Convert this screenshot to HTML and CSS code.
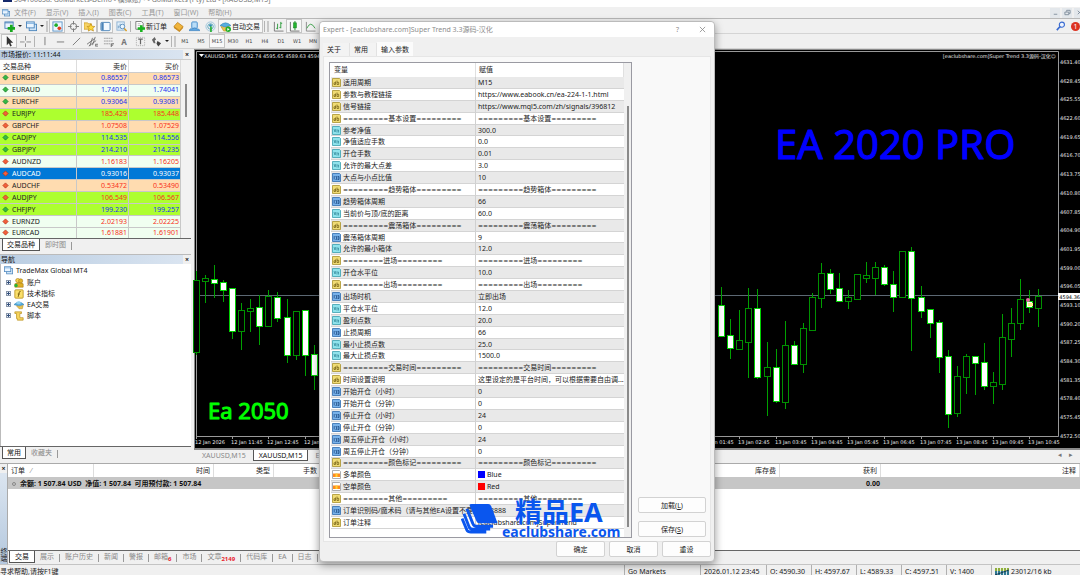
FILE: index.html
```html
<!DOCTYPE html>
<html lang="zh-CN">
<head>
<meta charset="utf-8">
<title>MetaTrader 4 - XAUUSD,M15</title>
<link rel="stylesheet" href="styles.css">
</head>
<body>
<svg class="sprite" aria-hidden="true">
  <symbol id="i-newchart" viewBox="0 0 12 12"><rect x="1" y="1" width="9" height="7" fill="#e8f3ff" stroke="#4b83b8"/><path d="M1 2h9" stroke="#4b83b8"/><path d="M8 4v8M4 8h8" stroke="#17a81d" stroke-width="3"/></symbol>
  <symbol id="i-profiles" viewBox="0 0 12 12"><rect x="3.500" y="3.500" width="8" height="7" fill="#cfe4f7" stroke="#4d86bd"/><rect x=".5" y="1" width="8.500" height="6.500" fill="#eaf5ff" stroke="#4d86bd"/><path d="M1 2.500h8" stroke="#6fa8dc"/></symbol>
  <symbol id="i-market" viewBox="0 0 12 12"><rect x="1" y="1" width="10" height="10" fill="#eef7ff" stroke="#5b93c7"/><circle cx="4.500" cy="4.500" r="2" fill="#1fae2b"/><circle cx="8" cy="8" r="2" fill="#e3401f"/></symbol>
  <symbol id="i-target" viewBox="0 0 12 12"><circle cx="6" cy="6" r="3.500" fill="none" stroke="#777"/><path d="M6 0v4M6 8v4M0 6h4M8 6h4" stroke="#777"/></symbol>
  <symbol id="i-star" viewBox="0 0 12 12"><path d="M0 2h4l1 1h3v6H0z" fill="#f6d366" stroke="#c99417" stroke-width=".7"/><path d="M7.500 3l1.300 2.700 3 .3-2.200 2 .7 3-2.800-1.500L4.700 11l.7-3-2-2 2.800-.3z" fill="#ffd93b" stroke="#b98312" stroke-width=".7"/></symbol>
  <symbol id="i-terminal" viewBox="0 0 12 12"><rect x="1" y="1.500" width="10" height="9" rx="1" fill="#f3f9ff" stroke="#4b83b8"/><rect x="1.500" y="2" width="2.500" height="8" fill="#4b83b8"/></symbol>
  <symbol id="i-tester" viewBox="0 0 12 12"><rect x="1" y="1" width="8" height="9" fill="#e3f0fb" stroke="#8db1d1"/><path d="M2.500 8V5M4.500 8V3" stroke="#6c9ac2"/><circle cx="7" cy="6" r="2.500" fill="#eaf6ff" stroke="#5b8ebd"/><path d="M9 8l2.500 3" stroke="#d69b22" stroke-width="1.500"/></symbol>
  <symbol id="i-order" viewBox="0 0 12 12"><path d="M2 .5h6l2 2V9H2z" fill="#fff" stroke="#777"/><path d="M4 3h3M4 5h4" stroke="#999" stroke-width=".7"/><path d="M8 4.500v7.500M4 8.200h8" stroke="#17b31d" stroke-width="2.800"/></symbol>
  <symbol id="i-book" viewBox="0 0 12 12"><path d="M1 6l4-4.500L11 6 7 10.500z" fill="#f1b53c" stroke="#b87a10" stroke-width=".8"/><path d="M1 6v1.500L7 12l4-4.500V6L7 10.500z" fill="#c88718"/></symbol>
  <symbol id="i-user" viewBox="0 0 12 12"><rect x="3" y="1" width="6" height="7" rx="1" fill="#b9ddf8" stroke="#3f8acb"/><path d="M0 10.500q1-3 3.500-2 3-2 5 0 2.500-.5 3.500 2z" fill="#5fa8e3" stroke="#3678b5" stroke-width=".6"/></symbol>
  <symbol id="i-signal" viewBox="0 0 12 12"><circle cx="6" cy="6" r="5" fill="none" stroke="#9cc5dc"/><circle cx="6" cy="6" r="3" fill="none" stroke="#55a4bb"/><circle cx="6" cy="5" r="1.500" fill="#2d8ab2"/><path d="M6.500 6v6" stroke="#22b02c" stroke-width="1.800"/></symbol>
  <symbol id="i-auto" viewBox="0 0 12 12"><path d="M0 5q6-6 12 0-6 3-12 0z" fill="#57aee0" stroke="#2d7aad" stroke-width=".6"/><path d="M1 6q4 2.500 9 0l-2 5H4z" fill="#eac44f" stroke="#b38a1c" stroke-width=".6"/><circle cx="9" cy="9" r="3" fill="#1fae2b"/><path d="M8 7.500v3L10.500 9z" fill="#fff"/></symbol>
  <symbol id="i-hat" viewBox="0 0 12 12"><path d="M0 5.500q6-6 12 0-6 3-12 0z" fill="#57aee0" stroke="#2d7aad" stroke-width=".6"/><path d="M3 2.500q3-2 5 0v2q-2 1-5 0z" fill="#8fd0f2"/><path d="M3 7q3 1.500 8-.5l-1 4H6z" fill="#eac44f" stroke="#b38a1c" stroke-width=".6"/></symbol>
  <symbol id="i-bars" viewBox="0 0 12 12"><path d="M1.500 1v10h10" fill="none" stroke="#777"/><path d="M5 3v6M5 8H3.500M8.500 1v7M8.500 2.500H10M8.500 7H7" fill="none" stroke="#2b9a3b"/></symbol>
  <symbol id="i-candles" viewBox="0 0 12 12"><path d="M1.500 1v10h10" fill="none" stroke="#666"/><path d="M6.500 0v10" stroke="#1b8f25"/><rect x="5" y="2" width="3" height="5.500" fill="#23b52f" stroke="#13801c" stroke-width=".6"/></symbol>
  <symbol id="i-line" viewBox="0 0 12 12"><path d="M1.500 1v10h10" fill="none" stroke="#888"/><path d="M2 8q4-9 9 0" fill="none" stroke="#3aa147"/></symbol>
  <symbol id="i-cursor" viewBox="0 0 12 12"><path d="M3 0v10l2.300-2 1.500 3.500 1.700-.8L7 7.300h3z" fill="#333"/></symbol>
  <symbol id="i-cross" viewBox="0 0 12 12"><path d="M6 0v5M6 8v4M0 6.500h5M7 6.500h5" stroke="#888"/></symbol>
  <symbol id="i-v" viewBox="0 0 12 12"><path d="M6.500 1v9" stroke="#777"/></symbol>
  <symbol id="i-h" viewBox="0 0 12 12"><path d="M2 6.500h8" stroke="#777"/></symbol>
  <symbol id="i-d" viewBox="0 0 12 12"><path d="M2 10L10 2" stroke="#777"/></symbol>
  <symbol id="i-chan" viewBox="0 0 12 12"><path d="M0 9l8-6M2 11l8-6M3 11L6 2M6 10l3-9M9 9h3M9 11h3M9.500 9v2" stroke="#666" fill="none" stroke-width=".9"/></symbol>
  <symbol id="i-fibo" viewBox="0 0 12 12"><path d="M1 2.500h10M1 5.500h10M1 8.500h7" stroke="#999" stroke-dasharray="2 .5"/><path d="M9 12V8.500h3M9 10h2" stroke="#666" fill="none"/></symbol>
  <symbol id="i-box" viewBox="0 0 12 12"><rect x="1.500" y="1.500" width="9" height="9" fill="none" stroke="#aaa" stroke-dasharray="1 1"/><path d="M3.500 3.500h5M6 3.500V9" stroke="#666" stroke-width="1.300"/></symbol>
  <symbol id="i-arrows" viewBox="0 0 12 12"><path d="M1 4l3-3 1.500 3L4 5l1 3H3z" fill="#666"/><path d="M7 5.500l4 2.500-3 3.500-2-3z" fill="#444"/></symbol>
  <symbol id="i-search" viewBox="0 0 12 12"><circle cx="7.500" cy="4" r="2.800" fill="#eef4ff" stroke="#3a6bd0" stroke-width="1.200"/><path d="M5.500 6L2 10" stroke="#3a6bd0" stroke-width="1.800"/></symbol>
  <symbol id="i-up" viewBox="0 0 8 8"><path d="M4 1l3 3-3 3-3-3z" fill="#35b845" stroke="#187a28" stroke-width=".8"/></symbol>
  <symbol id="i-down" viewBox="0 0 8 8"><path d="M4 1l3 3-3 3-3-3z" fill="#f2603a" stroke="#b53016" stroke-width=".8"/></symbol>
  <symbol id="i-str" viewBox="0 0 9 9"><path d="M.5.500h7l1 1v7h-8z" fill="#f0dc74" stroke="#a8922c" stroke-width=".8"/><path d="M3.500 3.500v3h-1.500v-1.700h1.500M5 2.500v4h1.700V4.300H5" fill="none" stroke="#6d5a10" stroke-width=".7"/></symbol>
  <symbol id="i-dbl" viewBox="0 0 9 9"><path d="M.5.500h7l1 1v7h-8z" fill="#8fe3ec" stroke="#3a9fae" stroke-width=".8"/><path d="M2 3l1 3 .8-3M5 3.500v3M6.500 6.500V4H5.500" fill="none" stroke="#20768a" stroke-width=".6"/></symbol>
  <symbol id="i-int" viewBox="0 0 9 9"><path d="M.5.500h7l1 1v7h-8z" fill="#78b2ea" stroke="#2f6cae" stroke-width=".8"/><path d="M2.200 3v3.500M3.500 3.500h1v3h-1M5.500 3.500h1.500v3H5.500M5.500 5H7" fill="none" stroke="#123f78" stroke-width=".7"/></symbol>
  <symbol id="i-col" viewBox="0 0 9 9"><path d="M.5.500h7l1 1v7h-8z" fill="#fff" stroke="#999" stroke-width=".8"/><path d="M1 3.500h7v3.500H1z" fill="#ff8a1e"/><path d="M3.500 3.500h2v3.500h-2z" fill="#ffd02e"/></symbol>
  <symbol id="i-acct" viewBox="0 0 12 12"><circle cx="4.500" cy="3" r="2.500" fill="#f5cf4d" stroke="#a67b13" stroke-width=".7"/><circle cx="8" cy="3.500" r="2.500" fill="#e5b52d" stroke="#a67b13" stroke-width=".7"/><path d="M1 11V7q5-3 10 0v4z" fill="#e0ae26" stroke="#a67b13" stroke-width=".7"/><circle cx="2.500" cy="9" r="2" fill="#2bb434"/></symbol>
  <symbol id="i-ind" viewBox="0 0 12 12"><rect x="1" y="1" width="10" height="10" rx="1" fill="#fadf6b" stroke="#b9921f"/><path d="M8 3q-2-.5-2 2L5 9.500M4.500 6H7" fill="none" stroke="#6d5206"/></symbol>
  <symbol id="i-script" viewBox="0 0 12 12"><path d="M1 1h8v2H7v5h4v3H4V9H3V3H1z" fill="#f6d45c" stroke="#b58c1c" stroke-width=".8"/></symbol>
</svg>

<header class="chrome">
  <div class="titlebar"><span class="app-mark"></span><span>504100658: GoMarkets-Demo - 模拟账户 - GoMarkets (Pty) Ltd - [XAUUSD,M15]</span></div>
  <nav class="menubar" aria-label="菜单">
    <svg class="icon"><use href="#i-profiles"/></svg>
    <button>文件(F)</button><button>显示(V)</button><button>插入(I)</button><button>图表(C)</button><button>工具(T)</button><button>窗口(W)</button><button>帮助(H)</button>
    <span class="spacer"></span>
    <button class="mdi" aria-label="最小化"><svg viewBox="0 0 8 8"><path d="M2 6h4" stroke="#7c8a99"/></svg></button>
    <button class="mdi" aria-label="还原"><svg viewBox="0 0 8 8"><path d="M3 3V1.500h4V5H5.500M1 3.500h4.500v3H1z" fill="none" stroke="#7c8a99"/></svg></button>
    <button class="mdi mdi-last" aria-label="关闭"><svg viewBox="0 0 8 8"><path d="M2 2l4 4M6 2L2 6" stroke="#7c8a99"/></svg></button>
  </nav>
  <div class="toolbar">
    <button class="tool" aria-label="新图表"><svg class="icon"><use href="#i-newchart"/></svg></button><span class="caret"></span>
    <button class="tool" aria-label="配置文件"><svg class="icon"><use href="#i-profiles"/></svg></button><span class="caret"></span>
    <span class="grip"></span>
    <button class="tool on" aria-label="市场报价"><svg class="icon"><use href="#i-market"/></svg></button>
    <button class="tool" aria-label="数据窗口"><svg class="icon"><use href="#i-target"/></svg></button>
    <button class="tool on" aria-label="导航"><svg class="icon"><use href="#i-star"/></svg></button>
    <button class="tool on" aria-label="终端"><svg class="icon"><use href="#i-terminal"/></svg></button>
    <button class="tool" aria-label="策略测试"><svg class="icon"><use href="#i-tester"/></svg></button>
    <span class="sep"></span>
    <button class="tool wide"><svg class="icon"><use href="#i-order"/></svg>新订单</button>
    <button class="tool" aria-label="编辑器"><svg class="icon"><use href="#i-book"/></svg></button>
    <button class="tool" aria-label="社区"><svg class="icon"><use href="#i-user"/></svg></button>
    <button class="tool" aria-label="信号"><svg class="icon"><use href="#i-signal"/></svg></button>
    <button class="tool wide on"><svg class="icon"><use href="#i-auto"/></svg>自动交易</button>
    <span class="sep"></span><span class="grip"></span>
    <button class="tool" aria-label="柱状图"><svg class="icon"><use href="#i-bars"/></svg></button>
    <button class="tool on" aria-label="蜡烛图"><svg class="icon"><use href="#i-candles"/></svg></button>
    <button class="tool" aria-label="折线图"><svg class="icon"><use href="#i-line"/></svg></button>
    <span class="spacer"></span>
    <button class="tool" aria-label="搜索"><svg class="icon"><use href="#i-search"/></svg></button>
    <button class="tool alert" aria-label="通知"><span class="bubble">1</span></button>
  </div>
  <div class="toolbar">
    <button class="tool on" aria-label="光标"><svg class="icon"><use href="#i-cursor"/></svg></button>
    <button class="tool" aria-label="十字线"><svg class="icon"><use href="#i-cross"/></svg></button>
    <span class="sep"></span>
    <button class="tool" aria-label="垂直线"><svg class="icon"><use href="#i-v"/></svg></button>
    <button class="tool" aria-label="水平线"><svg class="icon"><use href="#i-h"/></svg></button>
    <button class="tool" aria-label="趋势线"><svg class="icon"><use href="#i-d"/></svg></button>
    <button class="tool" aria-label="通道"><svg class="icon"><use href="#i-chan"/></svg></button>
    <button class="tool" aria-label="斐波那契"><svg class="icon"><use href="#i-fibo"/></svg></button>
    <button class="tool letter">A</button>
    <button class="tool" aria-label="标签"><svg class="icon"><use href="#i-box"/></svg></button>
    <button class="tool" aria-label="箭头"><svg class="icon"><use href="#i-arrows"/></svg></button><span class="caret"></span>
    <span class="sep"></span><span class="grip"></span>
    <button class="tool tf">M1</button><button class="tool tf">M5</button><button class="tool tf on">M15</button><button class="tool tf">M30</button><button class="tool tf">H1</button><button class="tool tf">H4</button><button class="tool tf">D1</button><button class="tool tf">W1</button><button class="tool tf">MN</button>
  </div>
</header>

<main class="main">
  <aside class="side">
    <section class="market">
      <h2 class="pane-title">市场报价: 11:11:44<button class="close" aria-label="关闭">×</button></h2>
      <div class="quotes">
        <table>
          <colgroup><col class="c-sym"><col class="c-bid"><col></colgroup>
          <thead><tr><th>交易品种</th><th>卖价</th><th>买价</th></tr></thead>
          <tbody id="quotes"></tbody>
        </table>
        <div class="scroll"><span class="thumb"></span></div>
      </div>
      <div class="tabs"><button class="tab active">交易品种</button><button class="tab">即时图</button></div>
    </section>
    <section class="navigator">
      <h2 class="pane-title">导航<button class="close" aria-label="关闭">×</button></h2>
      <ul class="tree">
        <li class="root"><svg class="icon"><use href="#i-profiles"/></svg>TradeMax Global MT4</li>
        <li><span class="plus"></span><svg class="icon"><use href="#i-acct"/></svg>账户</li>
        <li><span class="plus"></span><svg class="icon"><use href="#i-ind"/></svg>技术指标</li>
        <li><span class="plus"></span><svg class="icon"><use href="#i-hat"/></svg>EA交易</li>
        <li><span class="plus"></span><svg class="icon"><use href="#i-script"/></svg>脚本</li>
      </ul>
      <div class="tabs"><button class="tab active">常用</button><button class="tab">收藏夹</button></div>
    </section>
  </aside>
  <section class="workspace">
    <div class="chart">
      <svg class="plot" id="plot" role="img" aria-label="XAUUSD M15"></svg>
      <ol class="prices" id="prices"></ol>
    </div>
    <div class="chart-tabs">
      <button class="ctab">XAUUSD,M15</button><button class="ctab active">XAUUSD,M15</button><button class="ctab">EURUSD,H1</button>
      <span class="spacer"></span><span class="nudge">◂</span><span class="nudge">▸</span>
    </div>
  </section>
</main>

<section class="terminal">
  <div class="rail"><button class="close" aria-label="关闭">×</button><span class="rail-name">终端</span></div>
  <div class="term-body">
    <table class="orders">
      <colgroup><col class="o1"><col class="o2"><col class="o3"><col class="o4"><col class="o5"><col class="o6"><col></colgroup>
      <thead><tr><th>订单 <span class="slash">⁄</span></th><th>时间</th><th>类型</th><th>手数</th><th>库存费</th><th>获利</th><th>注释</th></tr></thead>
      <tbody><tr><td colspan="5"><span class="ring"></span>余额: 1 507.84 USD&nbsp; 净值: 1 507.84&nbsp; 可用预付款: 1 507.84</td><td>0.00</td><td></td></tr></tbody>
    </table>
    <div class="term-space"></div>
    <div class="tabs">
      <button class="tab active">交易</button><button class="tab">展示</button><button class="tab">账户历史</button><button class="tab">新闻</button><button class="tab">警报</button><button class="tab">邮箱<sub>6</sub></button><button class="tab">市场</button><button class="tab">文章<sub>2149</sub></button><button class="tab">代码库</button><button class="tab">EA</button><button class="tab">日志</button>
    </div>
  </div>
</section>

<footer class="status">
  <span class="s-help">寻求帮助,请按F1键</span>
  <span class="s-name">Go Markets</span><span class="s-time">2026.01.12 23:45</span><span class="s-val">O: 4590.30</span><span class="s-val">H: 4597.67</span><span class="s-val">L: 4589.33</span><span class="s-val">C: 4597.51</span><span class="s-val">V: 1400</span>
  <span class="s-net"><svg viewBox="0 0 14 9"><path d="M0 0h14v3H0z" fill="#8fae3c"/><path d="M0 3h14v6H0z" fill="#2f7892"/><path d="M2.500 0v9M5.500 0v9M8.500 0v9M11.500 0v9" stroke="#fff" stroke-width=".8"/><path d="M0 7L14 2" stroke="#123c55"/></svg>23012/16 kb</span>
</footer>

<div class="dialog" role="dialog" aria-labelledby="dlg-title">
  <div class="dlg-head"><span id="dlg-title">Expert - [eaclubshare.com]Super Trend 3.3源码-汉化</span><span class="spacer"></span><button aria-label="帮助">?</button><button aria-label="关闭"><svg viewBox="0 0 8 8"><path d="M1 1l6 6M7 1L1 7" stroke="#888" stroke-width=".9"/></svg></button></div>
  <div class="dlg-tabs"><button>关于</button><button>常用</button><button class="active">输入参数</button></div>
  <div class="dlg-page">
    <div class="listbox">
      <table class="params">
        <colgroup><col class="p-name"><col></colgroup>
        <thead><tr><th>变量</th><th>赋值</th></tr></thead>
        <tbody id="params"></tbody>
      </table>
      <div class="scroll"><span class="thumb"></span></div>
    </div>
    <div class="dlg-side"><button class="btn">加载(<u>L</u>)</button><button class="btn">保存(<u>S</u>)</button></div>
  </div>
  <div class="dlg-foot"><button class="btn">确定</button><button class="btn">取消</button><button class="btn">重设</button></div>
  <div class="brand">
    <svg viewBox="0 0 38 32"><path fill="#0a56ee" d="M11 1h17q2 0 3 2l6 16q1 2-1 2H19q-2 0-3-2L9 3q-1-2 2-2z"/><path d="M6 6l6 15q1 3 4 3h17M3 11l5 13q1 3 4 3h18M1 16l5 12q1 2 4 2h16" fill="none" stroke="#0a56ee" stroke-width="3"/></svg>
    <div class="brand-name">精品EA</div>
    <div class="brand-url">eaclubshare.com</div>
  </div>
</div>
<script src="app.js"></script>
</body>
</html>
```
FILE: styles.css
```css
* { box-sizing: border-box; }
body {
  margin: 0;
  height: 100vh;
  display: flex;
  flex-direction: column;
  overflow: hidden;
  background: #f0f0f0;
  color: #222;
  font: 7px/11px "Noto Sans", "Noto Sans CJK SC", sans-serif;
}
button { font: inherit; color: inherit; border: 0; background: none; padding: 0; margin: 0; white-space: nowrap; }
table { border-collapse: separate; border-spacing: 0; table-layout: fixed; width: 100%; }
th { font-weight: 400; text-align: left; }
th, td { padding: 0; white-space: nowrap; overflow: hidden; }
h2, ul, ol { margin: 0; padding: 0; list-style: none; font-size: inherit; font-weight: 400; }
.sprite { display: none; }
.icon { width: 11px; height: 11px; flex: none; }
.spacer { flex: 1; }

/* window chrome */
.chrome { flex: none; }
.titlebar { height: 7px; background: #fff; color: #777; display: flex; align-items: flex-end; gap: 2px; padding-left: 3px; overflow: hidden; line-height: 12px; }
.titlebar span:last-child { margin-bottom: 1px; }
.app-mark { width: 9px; height: 2px; background: #14286b; margin-bottom: 5px; }
.menubar { height: 12px; display: flex; align-items: center; gap: 10px; padding-left: 2px; border-bottom: 1px solid #b8b8b8; color: #999; }
.menubar .icon { width: 8px; height: 8px; margin-right: -6px; }
.mdi { width: 10px; height: 10px; background: #e3e7eb; display: grid; place-items: center; margin-left: -8px; }
.mdi svg { width: 7px; height: 7px; }
.mdi-last { margin-right: -4px; }
.toolbar { height: 15px; display: flex; align-items: center; padding-left: 1px; border-bottom: 1px solid #d4d4d4; }
.tool { width: 16px; height: 14px; flex: none; display: flex; align-items: center; justify-content: center; border: 1px solid transparent; }
.tool.on { background: #f8f8f8; border-color: #c4c4c4; }
.tool.wide { width: auto; padding: 0 2px 0 1px; gap: 1px; }
.tool.letter { font-weight: 700; color: #777; font-size: 8px; }
.tool.tf { font: 5px/10px "DejaVu Sans", sans-serif; color: #444; }
.caret { border: 2px solid transparent; border-top-color: #222; margin: 2px 1px 0 1px; height: 0; }
.sep { width: 1px; height: 11px; background: #b4b4b4; margin: 0 1px; flex: none; }
.grip { width: 2px; height: 11px; background: #c8c8c8; margin: 0 1px; flex: none; }
.alert { justify-content: flex-end; width: 12px; }
.bubble { width: 9px; height: 9px; border-radius: 5px; background: #dc3322; color: #fff; line-height: 9px; text-align: center; flex: none; margin-right: -1px; }

/* side panes */
.main { flex: 1; min-height: 0; display: flex; }
.side { width: 194px; flex: none; display: flex; flex-direction: column; padding: 1px 3px 3px 0; }
.pane-title { height: 9px; line-height: 9px; display: flex; justify-content: space-between; background: linear-gradient(90deg, #b9cde2, #dbe5f1); padding: 0 0 0 1px; color: #111; }
.close { width: 8px; height: 9px; line-height: 8px; font-weight: 700; background: #f0f0f0; color: #222; }
.quotes { display: flex; height: 179px; overflow: hidden; background: #fff; border-top: 1px solid #ccc; }
.quotes table { flex: 1; width: 0; height: 180px; }
.c-sym { width: 77px; }
.c-bid { width: 52px; }
.quotes thead th { height: 13px; border-right: 1px solid #ddd; border-bottom: 1px solid #ccc; padding: 0 3px; }
.quotes th:nth-child(n+2), .quotes td:nth-child(n+2) { text-align: right; padding-right: 1px; }
.quotes td { line-height: 10px; border-right: 1px solid #c8c8c8; border-bottom: 1px solid #c8c8c8; }
.quotes td svg { width: 7px; height: 7px; margin: 0 3px 0 2px; vertical-align: -1px; }
.peach { background: #ffdcb0; }
.mint { background: #f0fff0; }
.lime { background: #adff2f; }
.chosen, .chosen td { background: #0078d7; color: #fff; }
.rise { color: #2030f0; }
.fall { color: #f83020; }
.scroll { width: 10px; flex: none; background: #f2f2f2; display: flex; justify-content: center; }
.thumb { width: 2px; height: 33px; margin-top: 24px; background: #8a8a8a; }
.tabs { display: flex; flex: none; height: 14px; border-top: 1px solid #666; padding-left: 2px; color: #888; }
.tab { line-height: 10px; height: 12px; padding: 0 6px 0 5px; position: relative; }
.tab:not(.active)::after { content: ""; position: absolute; right: 0; top: 3px; height: 8px; border-right: 1px solid #999; }
.tab.active { background: #fff; color: #111; border: 1px solid #555; border-top: 0; padding: 0 4px; }
.tab sub { color: #e8202c; font-size: 6px; font-weight: 700; line-height: 1px; vertical-align: -2px; }
.navigator { flex: 1; display: flex; flex-direction: column; margin-top: 2px; border-top: 1px solid #bbb; }
.tree { flex: 1; background: #fff; border-left: 1px solid #bbb; padding-left: 3px; }
.tree li { display: flex; align-items: center; height: 11px; gap: 3px; padding: 0 2px; }
.tree .root { height: 13px; padding: 0; }
.tree .icon { width: 10px; height: 10px; }
.tree .root .icon { width: 9px; height: 9px; }
.plus { width: 5px; height: 5px; border: 1px solid #8a97ab; background: linear-gradient(#33507c, #33507c) center / 3px 1px no-repeat, linear-gradient(#33507c, #33507c) center / 1px 3px no-repeat, #eef2f8; }

/* chart */
.workspace { flex: 1; min-width: 0; display: flex; flex-direction: column; }
.chart { flex: 1; min-height: 0; display: flex; background: #000; border: 1px solid #8a8a8a; border-width: 1px 0 2px 1px; color: #e8e8e8; font: 5px/6px "DejaVu Sans", "Noto Sans CJK SC", sans-serif; }
.plot { flex: 1; min-width: 0; height: 100%; overflow: visible; }
.plot text { fill: #e8e8e8; }
.plot .big { font-family: "Noto Sans", sans-serif; stroke-linejoin: round; }
.plot .big-blue { font-size: 40px; fill: #00f; stroke: #00f; stroke-width: 1px; }
.plot .big-green { font-size: 22px; fill: #0f0; stroke: #0f0; stroke-width: 1px; }
.prices { width: 22px; flex: none; display: flex; flex-direction: column; justify-content: space-between; padding: 9px 0 9px 1px; position: relative; }
.prices li { height: 6px; white-space: nowrap; display: flex; align-items: center; gap: 1px; }
.prices li::before { content: ""; width: 1px; height: 1px; background: #ddd; }
.prices .now { position: absolute; left: 0; right: 0; top: 243px; height: 7px; background: #fff; color: #000; }
.chart-tabs { height: 13px; flex: none; display: flex; align-items: flex-start; padding-left: 1px; color: #888; }
.ctab { height: 11px; padding: 0 7px; }
.ctab.active { background: #fff; color: #111; border: 1px solid #555; border-top: 0; padding: 0 5px; }
.nudge { width: 11px; color: #777; font-family: "DejaVu Sans", sans-serif; }

/* terminal */
.terminal { height: 101px; flex: none; display: flex; border-top: 1px solid #aaa; }
.rail { width: 7px; flex: none; display: flex; flex-direction: column; justify-content: space-between; background: linear-gradient(#dfe8f2, #b4c8de); overflow: hidden; }
.rail .close { width: 7px; }
.rail-name { writing-mode: vertical-rl; line-height: 7px; margin-bottom: 2px; }
.term-body { flex: 1; min-width: 0; display: flex; flex-direction: column; border-left: 1px solid #aaa; }
.orders { background: #fff; }
.o1 { width: 86px; } .o2 { width: 120px; } .o3 { width: 60px; } .o4 { width: 47px; } .o5 { width: 459px; } .o6 { width: 101px; }
.orders th { height: 13px; text-align: right; padding: 0 3px; border-right: 1px solid #ddd; }
.orders th:first-child { text-align: left; }
.slash { color: #888; margin-left: 4px; }
.orders td { height: 12px; background: #c6c6c6; font-weight: 700; color: #111; text-align: right; padding-right: 1px; }
.orders td:first-child { text-align: left; }
.ring { display: inline-block; width: 4px; height: 4px; border: 1px solid #888; border-radius: 2px; margin: 0 4px; }
.term-space { flex: 1; background: #fff; }
.term-body .tabs { padding-left: 1px; }
.term-body .tab.active { padding: 0 5px; }

/* status bar */
.status { height: 11px; flex: none; display: flex; border-top: 1px solid #c4c4c4; line-height: 14px; white-space: nowrap; overflow: hidden; }
.status span { border-left: 1px solid #b0b0b0; padding-left: 3px; }
.status .s-help { flex: 1; border: 0; padding: 0; }
.s-name { width: 76px; } .s-time { width: 66px; } .s-val { width: 45px; }
.s-net { width: 89px; display: flex; gap: 2px; }
.s-net svg { width: 14px; height: 9px; margin-top: 3px; }

/* dialog */
.dialog { position: absolute; left: 319px; top: 21px; width: 396px; height: 541px; display: flex; flex-direction: column; background: #f0f0f0; border: 1px solid #bbb; border-radius: 4px; box-shadow: 0 3px 9px rgba(0,0,0,.4); padding: 0 3px 4px; }
.dlg-head { height: 15px; flex: none; margin: 0 -3px 5px; padding: 0 8px 0 3px; background: #fff; border-radius: 4px 4px 0 0; display: flex; align-items: center; gap: 20px; color: #8c8c8c; }
.dlg-head svg { width: 7px; height: 7px; display: block; }
.dlg-tabs { display: flex; align-items: flex-end; flex: none; }
.dlg-tabs button { height: 13px; padding: 0 8px 0 4px; background: #f3f3f3; border-right: 1px solid #e2e2e2; }
.dlg-tabs .active { height: 14px; background: #fbfbfb; border: 0; padding: 0 4px; }
.dlg-page { flex: 1; min-height: 0; display: flex; background: #f9f9f9; border: 1px solid #e6e6e6; padding: 5px 4px 3px 5px; gap: 6px; }
.listbox { flex: 1; display: flex; background: #fff; border: 1px solid #9a9aa2; padding: 0 0 9px 1px; }
.listbox .scroll { width: 7px; background: #f0f0f0; margin-bottom: -9px; }
.listbox .thumb { margin-top: 43px; height: 421px; }
.params { flex: 1; width: 0; height: 466px; }
.p-name { width: 145px; }
.params th { height: 14px; line-height: 14px; padding: 0 3px; border-right: 1px solid #e0e0e0; }
.params td { line-height: 9px; border-bottom: 1px solid #d4d4d4; border-right: 1px solid #d0d0d0; padding: 0 0 0 2px; }
.params tbody tr:nth-child(odd) { background: #e9e9e9; }
.params td svg { width: 9px; height: 9px; vertical-align: -2px; margin: 0 2px 0 -1px; }
.params td:last-child { border-right: 0; }
.rule { font: 6px/9px "DejaVu Sans", sans-serif; }
.chip { display: inline-block; width: 7px; height: 7px; vertical-align: -1px; margin-right: 2px; }
.chip-blue { background: #00f; }
.chip-red { background: #f00; }
.dlg-side { width: 68px; flex: none; display: flex; flex-direction: column; justify-content: flex-end; gap: 8px; padding-bottom: 1px; }
.btn { height: 16px; background: #fdfdfd; border: 1px solid #d2d2d2; border-radius: 2px; }
.dlg-foot { flex: none; display: flex; justify-content: flex-end; gap: 4px; }
.dlg-foot .btn { width: 49px; margin-top: -1px; }
.brand { position: absolute; left: 141px; top: 477px; display: grid; grid-template-columns: 38px auto; color: #0a56ee; font-weight: 700; pointer-events: none; }
.brand svg { grid-row: 1 / 3; width: 37px; height: 31px; margin-top: 4px; }
.brand-name { font-size: 27px; line-height: 25px; padding-left: 16px; }
.brand-url { font-size: 14px; line-height: 16px; padding-left: 3px; }
```
FILE: app.js
```js
const quotes = [
  ["EURGBP", "0.86557", "0.86573", "up", "peach"],
  ["EURAUD", "1.74014", "1.74041", "up", "mint"],
  ["EURCHF", "0.93064", "0.93081", "up", "peach"],
  ["EURJPY", "185.429", "185.448", "down", "lime"],
  ["GBPCHF", "1.07508", "1.07529", "down", "peach"],
  ["CADJPY", "114.535", "114.556", "up", "lime"],
  ["GBPJPY", "214.210", "214.235", "up", "lime"],
  ["AUDNZD", "1.16183", "1.16205", "down", "mint"],
  ["AUDCAD", "0.93016", "0.93037", "down", "chosen"],
  ["AUDCHF", "0.53472", "0.53490", "down", "peach"],
  ["AUDJPY", "106.549", "106.567", "down", "lime"],
  ["CHFJPY", "199.230", "199.257", "up", "lime"],
  ["EURNZD", "2.02193", "2.02225", "down", "mint"],
  ["EURCAD", "1.61881", "1.61901", "down", "mint"],
];
document.getElementById("quotes").innerHTML = quotes.map(([s, b, a, dir, tone]) => {
  const c = dir === "up" ? "rise" : "fall";
  return `<tr class="${tone}"><td><svg><use href="#i-${dir}"/></svg>${s}</td><td class="${c}">${b}</td><td class="${c}">${a}</td></tr>`;
}).join("");

const rule = (word, before = 9) =>
  `<span class="rule">${"=".repeat(before)}</span>${word}<span class="rule">${"=".repeat(9)}</span>`;
const group = (word, before) => ["str", rule(word, before), rule(word)];
const params = [
  ["str", "适用周期", "M15"],
  ["str", "参数与教程链接", "https://www.eabook.cn/ea-224-1-1.html"],
  ["str", "信号链接", "https://www.mql5.com/zh/signals/396812"],
  group("基本设置"),
  ["dbl", "参考净值", "300.0"],
  ["dbl", "净值适应手数", "0.0"],
  ["dbl", "开仓手数", "0.01"],
  ["dbl", "允许的最大点差", "3.0"],
  ["int", "大点与小点比值", "10"],
  group("趋势箱体"),
  ["int", "趋势箱体周期", "66"],
  ["dbl", "当前价与顶/底的距离", "60.0"],
  group("震荡箱体"),
  ["int", "震荡箱体周期", "9"],
  ["dbl", "允许的最小箱体", "12.0"],
  group("进场", 8),
  ["dbl", "开仓水平位", "10.0"],
  group("出场", 8),
  ["int", "出场时机", "立即出场"],
  ["dbl", "平仓水平位", "12.0"],
  ["dbl", "盈利点数", "20.0"],
  ["int", "止损周期", "66"],
  ["dbl", "最小止损点数", "25.0"],
  ["dbl", "最大止损点数", "1500.0"],
  group("交易时间"),
  ["str", "时间设置说明", "这里设定的是平台时间，可以根据需要自由调..."],
  ["int", "开始开仓（小时）", "0"],
  ["int", "开始开仓（分钟）", "0"],
  ["int", "停止开仓（小时）", "24"],
  ["int", "停止开仓（分钟）", "0"],
  ["int", "周五停止开仓（小时）", "24"],
  ["int", "周五停止开仓（分钟）", "0"],
  group("颜色标记"),
  ["col", "多单颜色", '<span class="chip chip-blue"></span>Blue'],
  ["col", "空单颜色", '<span class="chip chip-red"></span>Red'],
  group("其他"),
  ["int", "订单识别码/魔术码（请与其他EA设置不要重复）", "8888888"],
  ["str", "订单注释", "[eaclubshare.com]SuperTrend"],
];
document.getElementById("params").innerHTML = params.map(([t, n, v]) =>
  `<tr><td><svg><use href="#i-${t}"/></svg>${n}</td><td>${v}</td></tr>`).join("");

const prices = ["4631.40", "4628.45", "4625.55", "4622.60", "4619.65", "4616.70", "4613.75", "4610.80", "4607.85", "4604.90", "4601.95", "4599.00", "4596.05", "4593.10", "4590.20", "4587.25", "4584.30", "4581.35", "4578.40", "4575.45", "4572.50"];
document.getElementById("prices").innerHTML =
  prices.map(p => `<li>${p}</li>`).join("") + '<li class="now">4594.36</li>';

// slot, high, body top, body bottom, low, filled
const candles = [
  [-1,221,231,302,305,0],[0,225,229,231,253,0],[1,215,230,233,248,1],[2,230,233,240,252,1],[3,239,239,281,289,1],
  [4,253,261,281,300,0],[5,249,259,261,282,0],[6,245,258,276,295,1],[7,240,247,276,277,0],[8,242,248,268,272,1],
  [9,249,268,305,313,1],[10,261,262,305,310,0],[11,261,261,305,326,1],[12,295,305,325,340,1],
  [57,237,256,286,286,1],[58,269,286,298,309,1],[59,260,291,299,299,0],[60,238,259,292,328,0],[61,239,259,327,329,1],
  [62,292,318,326,366,0],[63,299,318,351,353,1],[64,271,296,352,359,0],[65,291,296,314,314,1],[66,273,279,314,323,0],
  [67,243,248,280,281,0],[68,213,224,248,258,0],[69,219,224,239,244,1],[70,223,239,251,252,1],[71,240,248,251,259,0],
  [72,224,225,249,249,0],[73,212,226,228,233,0],[74,212,218,228,245,0],[75,215,218,234,236,1],[76,221,235,247,262,1],
  [77,201,202,247,247,0],[78,197,202,248,301,1],[79,236,248,261,268,1],[80,259,260,273,288,1],[81,270,273,307,323,1],
  [82,300,307,364,378,1],[83,316,327,363,367,0],[84,304,307,327,344,0],[85,306,307,313,345,1],[86,293,313,336,340,1],
  [87,322,333,336,354,0],[88,264,288,334,340,0],[89,258,274,289,307,0],[90,229,250,273,280,0],[91,240,252,257,263,1],
  [92,239,247,258,277,0],
];
const slotX = i => Math.round(10 + i * 9.057);
let out = '<path d="M1.500 387V1.500H863.500V386.500H1.500" fill="none" stroke="#999"/>';
out += '<path d="M5 245.500H863" stroke="#5c6873"/>';
for (const [i, hi, top, bottom, lo, filled] of candles) {
  const x = slotX(i);
  out += `<path d="M${x + .5} ${hi}V${top}M${x + .5} ${bottom}V${lo}" stroke="#00a000"/>`;
  out += `<rect x="${x - 2.5}" y="${top - .5}" width="6" height="${bottom - top + 1}" fill="${filled ? "#fff" : "#000"}" stroke="${filled ? "#00d000" : "#009000"}"/>`;
}
out += '<circle cx="833" cy="250" r="2" fill="#e86aa8"/><path d="M833 253h5v3h-5z" fill="#fff28a"/>';
for (let k = 0; k < 24; k++) {
  const x = Math.round(k * 36.23) + 1;
  const label = k === 0 ? "12 Jan 2026"
    : k < 14 ? `12 Jan ${k + 10}:45`
    : `13 Jan ${String(k - 13).padStart(2, "0")}:45`;
  out += `<path d="M${x + .5} 387v2" stroke="#999"/><text x="${x - 1}" y="394">${label}</text>`;
}
out += '<path d="M4 4h5l-2.500 3z" fill="#fff"/><text x="9" y="8">XAUUSD,M15&#160; 4592.74 4595.65 4589.63 4594.36</text>';
out += '<text x="861" y="8" text-anchor="end">[eaclubshare.com]Super Trend 3.3源码-汉化☺</text>';
out += '<text class="big big-blue" x="580" y="109">EA 2020 PRO</text>';
out += '<text class="big big-green" x="13" y="369">Ea 2050</text>';
document.getElementById("plot").innerHTML = out;
```
